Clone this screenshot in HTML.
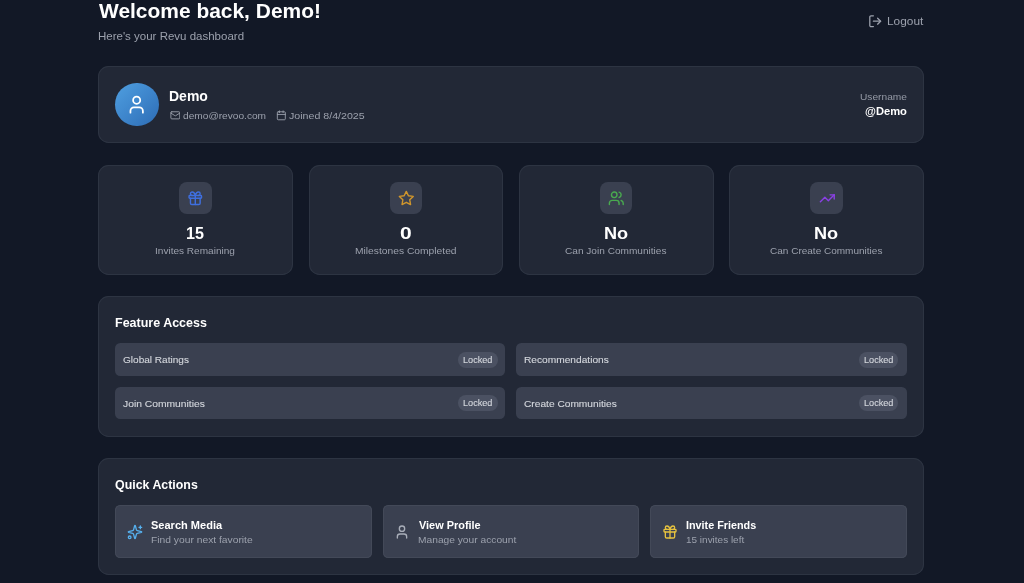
<!DOCTYPE html><html><head><meta charset="utf-8"><title>Revu Dashboard</title><style>
html,body{margin:0;padding:0}body{width:1024px;height:583px;overflow:hidden;position:relative;background:#121826;font-family:"Liberation Sans",sans-serif}
.b{position:absolute;box-sizing:border-box}.t{position:absolute;white-space:nowrap;line-height:normal;margin:0}#txt{position:absolute;left:0;top:0;width:1024px;height:583px;will-change:transform}
</style></head><body>
<div class="b" style="left:98.2px;top:66px;width:826px;height:77.3px;border-radius:10.7px;background:#222836;box-shadow:inset 0 0 0 1px #2d3442;"></div>
<div class="b" style="left:98.2px;top:164.7px;width:194.9px;height:110.3px;border-radius:10.7px;background:#222836;box-shadow:inset 0 0 0 1px #2d3442;"></div>
<div class="b" style="left:308.5px;top:164.7px;width:194.9px;height:110.3px;border-radius:10.7px;background:#222836;box-shadow:inset 0 0 0 1px #2d3442;"></div>
<div class="b" style="left:518.8px;top:164.7px;width:194.9px;height:110.3px;border-radius:10.7px;background:#222836;box-shadow:inset 0 0 0 1px #2d3442;"></div>
<div class="b" style="left:729.1px;top:164.7px;width:194.9px;height:110.3px;border-radius:10.7px;background:#222836;box-shadow:inset 0 0 0 1px #2d3442;"></div>
<div class="b" style="left:98.2px;top:296.2px;width:826px;height:141px;border-radius:10.7px;background:#222836;box-shadow:inset 0 0 0 1px #2d3442;"></div>
<div class="b" style="left:98.2px;top:458.2px;width:826px;height:116.4px;border-radius:10.7px;background:#222836;box-shadow:inset 0 0 0 1px #2d3442;"></div>
<div class="b" style="left:115.3px;top:82.8px;width:43.4px;height:43.4px;border-radius:22px;background:linear-gradient(135deg,#4f9fe0 0%,#3e86cc 50%,#2d6cb4 100%);"></div>
<svg class="b" style="left:126.3px;top:93.9px" width="21.33" height="21.33" viewBox="0 0 24 24" fill="none" stroke="#ffffff" stroke-width="2" stroke-linecap="round" stroke-linejoin="round"><path d="M19 21v-2a4 4 0 0 0-4-4H9a4 4 0 0 0-4 4v2"/><circle cx="12" cy="7" r="4"/></svg>
<svg class="b" style="left:169.6px;top:110.4px" width="10.67" height="10.67" viewBox="0 0 24 24" fill="none" stroke="#9ca1ad" stroke-width="2" stroke-linecap="round" stroke-linejoin="round"><rect x="2" y="4" width="20" height="16" rx="2"/><path d="m22 7-8.970 5.700a1.940 1.940 0 0 1-2.060 0L2 7"/></svg>
<svg class="b" style="left:276.1px;top:110.3px" width="10.67" height="10.67" viewBox="0 0 24 24" fill="none" stroke="#9ca1ad" stroke-width="2" stroke-linecap="round" stroke-linejoin="round"><rect x="3" y="4" width="18" height="18" rx="2"/><path d="M16 2v4"/><path d="M8 2v4"/><path d="M3 10h18"/></svg>
<svg class="b" style="left:868.0px;top:13.7px" width="14.4" height="14.4" viewBox="0 0 24 24" fill="none" stroke="#9ca1ad" stroke-width="2.1" stroke-linecap="round" stroke-linejoin="round"><path d="M9 21H5a2 2 0 0 1-2-2V5a2 2 0 0 1 2-2h4"/><polyline points="16 17 21 12 16 7"/><line x1="21" y1="12" x2="9" y2="12"/></svg>
<div class="b" style="left:179.3px;top:181.8px;width:32.4px;height:32.4px;border-radius:8px;background:#3a4050;"></div>
<svg class="b" style="left:187.2px;top:189.8px" width="16.6" height="16.6" viewBox="0 0 24 24" fill="none" stroke="#3f6fe0" stroke-width="2.05" stroke-linecap="round" stroke-linejoin="round"><rect x="3" y="8" width="18" height="4" rx="1"/><path d="M12 8v13"/><path d="M19 12v7a2 2 0 0 1-2 2H7a2 2 0 0 1-2-2v-7"/><path d="M7.500 8a2.500 2.500 0 0 1 0-5A4.800 8 0 0 1 12 8a4.800 8 0 0 1 4.500-5 2.500 2.500 0 0 1 0 5"/></svg>
<div class="b" style="left:389.6px;top:181.8px;width:32.4px;height:32.4px;border-radius:8px;background:#3a4050;"></div>
<svg class="b" style="left:397.5px;top:189.8px" width="16.6" height="16.6" viewBox="0 0 24 24" fill="none" stroke="#d0962c" stroke-width="2.05" stroke-linecap="round" stroke-linejoin="round"><polygon points="12 2 15.090 8.260 22 9.270 17 14.140 18.180 21.020 12 17.770 5.820 21.020 7 14.140 2 9.270 8.910 8.260 12 2"/></svg>
<div class="b" style="left:599.9px;top:181.8px;width:32.4px;height:32.4px;border-radius:8px;background:#3a4050;"></div>
<svg class="b" style="left:607.8000000000001px;top:189.8px" width="16.6" height="16.6" viewBox="0 0 24 24" fill="none" stroke="#49aa4f" stroke-width="2.05" stroke-linecap="round" stroke-linejoin="round"><path d="M16 21v-2a4 4 0 0 0-4-4H6a4 4 0 0 0-4 4v2"/><circle cx="9" cy="7" r="4"/><path d="M22 21v-2a4 4 0 0 0-3-3.870"/><path d="M16 3.130a4 4 0 0 1 0 7.750"/></svg>
<div class="b" style="left:810.1999999999999px;top:181.8px;width:32.4px;height:32.4px;border-radius:8px;background:#3a4050;"></div>
<svg class="b" style="left:818.5px;top:189.8px" width="16.6" height="16.6" viewBox="0 0 24 24" fill="none" stroke="#8a40e4" stroke-width="2.05" stroke-linecap="round" stroke-linejoin="round"><polyline points="22 7 13.500 15.500 8.500 10.500 2 17"/><polyline points="16 7 22 7 22 13"/></svg>
<div class="b" style="left:115.4px;top:343.2px;width:390.1px;height:32.5px;border-radius:5.3px;background:#3a4050;"></div>
<div class="b" style="left:458.29999999999995px;top:351.8px;width:39.3px;height:16.1px;border-radius:8.1px;background:#4b5162;"></div>
<div class="b" style="left:516.3px;top:343.2px;width:390.6px;height:32.5px;border-radius:5.3px;background:#3a4050;"></div>
<div class="b" style="left:859.1999999999999px;top:351.8px;width:39.3px;height:16.1px;border-radius:8.1px;background:#4b5162;"></div>
<div class="b" style="left:115.4px;top:387px;width:390.1px;height:32.3px;border-radius:5.3px;background:#3a4050;"></div>
<div class="b" style="left:458.29999999999995px;top:395.2px;width:39.3px;height:16.1px;border-radius:8.1px;background:#4b5162;"></div>
<div class="b" style="left:516.3px;top:387px;width:390.6px;height:32.3px;border-radius:5.3px;background:#3a4050;"></div>
<div class="b" style="left:859.1999999999999px;top:395.2px;width:39.3px;height:16.1px;border-radius:8.1px;background:#4b5162;"></div>
<div class="b" style="left:115.4px;top:505px;width:256.6px;height:52.7px;border-radius:5.3px;background:#3a4050;box-shadow:inset 0 0 0 1px #434958;"></div>
<div class="b" style="left:382.6px;top:505px;width:256.6px;height:52.7px;border-radius:5.3px;background:#3a4050;box-shadow:inset 0 0 0 1px #434958;"></div>
<div class="b" style="left:649.8px;top:505px;width:257.1px;height:52.7px;border-radius:5.3px;background:#3a4050;box-shadow:inset 0 0 0 1px #434958;"></div>
<svg class="b" style="left:126.7px;top:523.6px" width="16" height="16" viewBox="0 0 24 24" fill="none" stroke="#56b0ee" stroke-width="2" stroke-linecap="round" stroke-linejoin="round"><path d="M9.937 15.500A2 2 0 0 0 8.500 14.063l-6.135-1.582a.5.500 0 0 1 0-.962L8.500 9.936A2 2 0 0 0 9.937 8.500l1.582-6.135a.5.500 0 0 1 .963 0L14.063 8.500A2 2 0 0 0 15.500 9.937l6.135 1.581a.5.500 0 0 1 0 .964L15.500 14.063a2 2 0 0 0-1.437 1.437l-1.582 6.135a.5.500 0 0 1-.963 0z"/><path d="M20 3v4"/><path d="M22 5h-4"/><circle cx="4" cy="20" r="2"/></svg>
<svg class="b" style="left:394.4px;top:523.6px" width="16" height="16" viewBox="0 0 24 24" fill="none" stroke="#a9aeb9" stroke-width="2" stroke-linecap="round" stroke-linejoin="round"><path d="M19 21v-2a4 4 0 0 0-4-4H9a4 4 0 0 0-4 4v2"/><circle cx="12" cy="7" r="4"/></svg>
<svg class="b" style="left:661.6px;top:523.6px" width="16" height="16" viewBox="0 0 24 24" fill="none" stroke="#e6c23f" stroke-width="2" stroke-linecap="round" stroke-linejoin="round"><rect x="3" y="8" width="18" height="4" rx="1"/><path d="M12 8v13"/><path d="M19 12v7a2 2 0 0 1-2 2H7a2 2 0 0 1-2-2v-7"/><path d="M7.500 8a2.500 2.500 0 0 1 0-5A4.800 8 0 0 1 12 8a4.800 8 0 0 1 4.500-5 2.500 2.500 0 0 1 0 5"/></svg>
<div id="txt">
<div class="t" id="t1" style="left:99.07px;top:-1.22px;font-size:20.8px;font-weight:700;color:#ffffff;letter-spacing:0.000px;transform:scaleX(1.007);transform-origin:0 0;">Welcome back, Demo!</div>
<div class="t" id="t2" style="left:98.20px;top:29.66px;font-size:11.2px;font-weight:400;color:#9ca1ad;letter-spacing:0.000px;transform:scaleX(1.028);transform-origin:0 0;">Here's your Revu dashboard</div>
<div class="t" id="t3" style="left:887.24px;top:14.86px;font-size:11.2px;font-weight:400;color:#9ca1ad;letter-spacing:0.000px;transform:scaleX(1.060);transform-origin:0 0;">Logout</div>
<div class="t" id="t4" style="left:168.60px;top:88.42px;font-size:13.9px;font-weight:700;color:#ffffff;letter-spacing:0.000px;transform:scaleX(1.008);transform-origin:0 0;">Demo</div>
<div class="t" id="t5" style="left:182.73px;top:110.23px;font-size:9.8px;font-weight:400;color:#9ca1ad;letter-spacing:0.000px;transform:scaleX(1.036);transform-origin:0 0;">demo@revoo.com</div>
<div class="t" id="t6" style="left:288.92px;top:110.23px;font-size:9.8px;font-weight:400;color:#9ca1ad;letter-spacing:0.000px;transform:scaleX(1.085);transform-origin:0 0;">Joined 8/4/2025</div>
<div class="t" id="t7" style="left:859.84px;top:91.13px;font-size:9.8px;font-weight:400;color:#959aa6;letter-spacing:0.000px;transform:scaleX(1.038);transform-origin:0 0;">Username</div>
<div class="t" id="t8" style="left:865.03px;top:105.99px;font-size:10.4px;font-weight:700;color:#ffffff;letter-spacing:0.000px;transform:scaleX(1.075);transform-origin:0 0;">@Demo</div>
<div class="t" id="s1" style="left:185.62px;top:223.62px;font-size:17px;font-weight:700;color:#ffffff;letter-spacing:0.000px;transform:scaleX(0.947);transform-origin:0 0;">15</div>
<div class="t" id="s1l" style="left:154.66px;top:245.33px;font-size:9.8px;font-weight:400;color:#9ca1ad;letter-spacing:0.000px;transform:scaleX(1.026);transform-origin:0 0;">Invites Remaining</div>
<div class="t" id="s2" style="left:400.03px;top:223.62px;font-size:17px;font-weight:700;color:#ffffff;letter-spacing:0.000px;transform:scaleX(1.236);transform-origin:0 0;">0</div>
<div class="t" id="s2l" style="left:355.02px;top:245.33px;font-size:9.8px;font-weight:400;color:#9ca1ad;letter-spacing:0.000px;transform:scaleX(1.048);transform-origin:0 0;">Milestones Completed</div>
<div class="t" id="s3" style="left:603.78px;top:223.62px;font-size:17px;font-weight:700;color:#ffffff;letter-spacing:0.000px;transform:scaleX(1.066);transform-origin:0 0;">No</div>
<div class="t" id="s3l" style="left:565.31px;top:245.33px;font-size:9.8px;font-weight:400;color:#9ca1ad;letter-spacing:0.000px;transform:scaleX(1.030);transform-origin:0 0;">Can Join Communities</div>
<div class="t" id="s4" style="left:813.98px;top:223.62px;font-size:17px;font-weight:700;color:#ffffff;letter-spacing:0.000px;transform:scaleX(1.066);transform-origin:0 0;">No</div>
<div class="t" id="s4l" style="left:769.95px;top:245.33px;font-size:9.8px;font-weight:400;color:#9ca1ad;letter-spacing:0.000px;transform:scaleX(1.022);transform-origin:0 0;">Can Create Communities</div>
<div class="t" id="f0" style="left:114.90px;top:316.00px;font-size:12.6px;font-weight:700;color:#ffffff;letter-spacing:0.000px;transform:scaleX(0.992);transform-origin:0 0;">Feature Access</div>
<div class="t" id="f1" style="left:123.19px;top:354.33px;font-size:9.8px;font-weight:400;color:#d3d6dc;letter-spacing:0.000px;transform:scaleX(1.026);transform-origin:0 0;-webkit-text-stroke:0.12px #d3d6dc;">Global Ratings</div>
<div class="t" id="f2" style="left:524.16px;top:354.33px;font-size:9.8px;font-weight:400;color:#d3d6dc;letter-spacing:0.000px;transform:scaleX(1.038);transform-origin:0 0;-webkit-text-stroke:0.12px #d3d6dc;">Recommendations</div>
<div class="t" id="f3" style="left:123.03px;top:398.03px;font-size:9.8px;font-weight:400;color:#d3d6dc;letter-spacing:0.000px;transform:scaleX(1.052);transform-origin:0 0;-webkit-text-stroke:0.12px #d3d6dc;">Join Communities</div>
<div class="t" id="f4" style="left:524.41px;top:398.03px;font-size:9.8px;font-weight:400;color:#d3d6dc;letter-spacing:0.000px;transform:scaleX(1.039);transform-origin:0 0;-webkit-text-stroke:0.12px #d3d6dc;">Create Communities</div>
<div class="t" id="b1" style="left:463.26px;top:355.20px;font-size:8.4px;font-weight:400;color:#d3d6dc;letter-spacing:0.000px;transform:scaleX(1.090);transform-origin:0 0;-webkit-text-stroke:0.12px #d3d6dc;">Locked</div>
<div class="t" id="b2" style="left:864.26px;top:355.20px;font-size:8.4px;font-weight:400;color:#d3d6dc;letter-spacing:0.000px;transform:scaleX(1.090);transform-origin:0 0;-webkit-text-stroke:0.12px #d3d6dc;">Locked</div>
<div class="t" id="b3" style="left:463.26px;top:398.00px;font-size:8.4px;font-weight:400;color:#d3d6dc;letter-spacing:0.000px;transform:scaleX(1.090);transform-origin:0 0;-webkit-text-stroke:0.12px #d3d6dc;">Locked</div>
<div class="t" id="b4" style="left:864.26px;top:398.00px;font-size:8.4px;font-weight:400;color:#d3d6dc;letter-spacing:0.000px;transform:scaleX(1.090);transform-origin:0 0;-webkit-text-stroke:0.12px #d3d6dc;">Locked</div>
<div class="t" id="q0" style="left:115.14px;top:477.90px;font-size:12.6px;font-weight:700;color:#ffffff;letter-spacing:0.000px;transform:scaleX(0.983);transform-origin:0 0;">Quick Actions</div>
<div class="t" id="q1" style="left:151.12px;top:519.05px;font-size:11.1px;font-weight:700;color:#ffffff;letter-spacing:0.000px;transform:scaleX(0.994);transform-origin:0 0;">Search Media</div>
<div class="t" id="q1s" style="left:151.11px;top:534.23px;font-size:9.8px;font-weight:400;color:#9ca1ad;letter-spacing:0.000px;transform:scaleX(1.049);transform-origin:0 0;">Find your next favorite</div>
<div class="t" id="q2" style="left:418.62px;top:519.05px;font-size:11.1px;font-weight:700;color:#ffffff;letter-spacing:0.000px;transform:scaleX(0.984);transform-origin:0 0;">View Profile</div>
<div class="t" id="q2s" style="left:418.01px;top:534.23px;font-size:9.8px;font-weight:400;color:#9ca1ad;letter-spacing:0.000px;transform:scaleX(1.043);transform-origin:0 0;">Manage your account</div>
<div class="t" id="q3" style="left:685.85px;top:519.05px;font-size:11.1px;font-weight:700;color:#ffffff;letter-spacing:0.000px;transform:scaleX(0.973);transform-origin:0 0;">Invite Friends</div>
<div class="t" id="q3s" style="left:685.76px;top:534.23px;font-size:9.8px;font-weight:400;color:#9ca1ad;letter-spacing:0.000px;transform:scaleX(1.018);transform-origin:0 0;">15 invites left</div>
</div>
</body></html>
